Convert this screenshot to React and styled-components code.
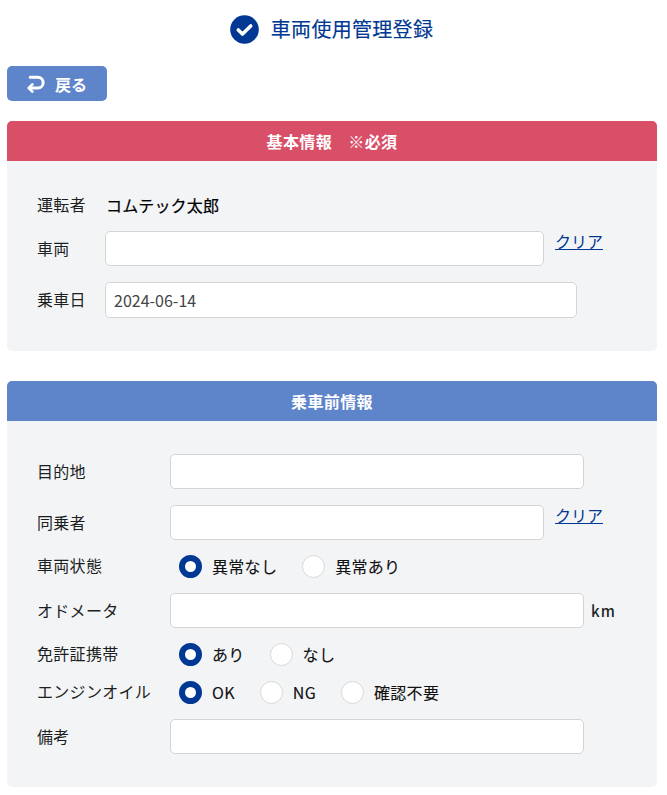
import React from "react";
import styled, { createGlobalStyle } from "styled-components";

const FONT = `"Noto Sans CJK JP", "Noto Sans", sans-serif`;

const GlobalStyle = createGlobalStyle`
  * {
    box-sizing: border-box;
  }
  body {
    margin: 0;
    background-color: #fff;
    font-family: ${FONT};
    color: #212529;
  }
`;

const Page = styled.div`
  padding: 14px 10px 8px 7px;
`;
const Heading = styled.h1`
  display: flex;
  justify-content: center;
  align-items: center;
  gap: 12px;
  height: 30px;
  margin: 0 0 22px;
  padding-right: 1px;
  font-size: 20px;
  font-weight: 400;
  letter-spacing: 0.3px;
  -webkit-text-stroke: 0.15px #003893;
  color: #003893;
  line-height: 30px;
`;
const BackButton = styled.button`
  display: flex;
  align-items: center;
  gap: 10px;
  width: 100px;
  height: 35px;
  padding: 0 0 0 20px;
  margin-bottom: 20px;
  border: 0;
  border-radius: 5px;
  background-color: #5e84ca;
  color: #fff;
  font-family: ${FONT};
  font-size: 16px;
  font-weight: 700;
`;
const Card = styled.section`
  margin-bottom: 30px;
  border-radius: 5px;
  overflow: hidden;
  background-color: #f3f4f6;
`;
const CardHeader = styled.h2`
  height: 40px;
  margin: 0;
  background-color: ${(p) => p.$color};
  color: #fff;
  font-size: 16px;
  font-weight: 700;
  letter-spacing: 0.35px;
  line-height: 40px;
  text-align: center;
`;
const CardBody = styled.div`
  display: flex;
  flex-direction: column;
  padding: ${(p) => p.$top}px 0 33px 30px;
`;
const Row = styled.div`
  display: grid;
  grid-template-columns: ${(p) => p.$label}px 1fr;
  align-items: center;
  min-height: ${(p) => p.$height || 35}px;
  margin-top: ${(p) => p.$gap || 0}px;
`;
const Label = styled.label`
  position: relative;
  top: -1px;
  font-size: 16px;
  letter-spacing: 0.3px;
  line-height: 24px;
  color: #1c1f22;
`;
const Value = styled.div`
  margin-left: -1px;
  font-size: 16px;
  font-weight: 400;
  letter-spacing: 0.15px;
  -webkit-text-stroke: 0.2px #000;
  color: #000;
  line-height: 24px;
`;
const Field = styled.div`
  display: flex;
  align-items: ${(p) => (p.$top ? "flex-start" : "center")};
`;
const Input = styled.input`
  width: ${(p) => p.$width}px;
  height: ${(p) => p.$height || 35}px;
  padding: 0 8px;
  border: 1px solid #d4d4d4;
  border-radius: 5px;
  background-color: #fff;
  color: #444;
  font-family: ${FONT};
  font-size: 16px;
  outline: none;
`;
const ClearLink = styled.a`
  margin: 0 0 0 11px;
  font-size: 16px;
  line-height: 21px;
  color: #003893;
  text-decoration: underline;
`;
const Unit = styled.span`
  margin-left: 7px;
  font-size: 15px;
  font-weight: 500;
  letter-spacing: 1px;
  color: #212529;
`;
const RadioGroup = styled.div`
  display: flex;
  align-items: center;
  gap: 25px;
  padding-left: 9px;
`;
const RadioItem = styled.label`
  display: flex;
  align-items: center;
  gap: 10px;
  font-size: 16px;
  font-weight: 400;
  letter-spacing: 0.3px;
  color: #111;
  -webkit-text-stroke: 0.12px #111;
`;
const RadioMark = styled.span`
  width: 23px;
  height: 23px;
  border-radius: 50%;
  border: ${(p) => (p.$checked ? "6.5px solid #003893" : "1px solid #d8d8d8")};
  background-color: #fff;
`;

function Radios({ items }) {
  return (
    <RadioGroup>
      {items.map((item, i) => (
        <RadioItem key={item}>
          <RadioMark $checked={i === 0} />
          {item}
        </RadioItem>
      ))}
    </RadioGroup>
  );
}

export default function App() {
  return (
    <Page>
      <GlobalStyle />
      <Heading>
        <svg width="29" height="29" viewBox="0 0 29 29" aria-hidden="true">
          <circle cx="14.5" cy="14.5" r="14.3" fill="#003893" />
          <path d="M8.3 15l4.2 4 8.2-8" fill="none" stroke="#fff" strokeWidth="3.6" strokeLinecap="round" strokeLinejoin="round" />
        </svg>
        車両使用管理登録
      </Heading>
      <BackButton>
        <svg width="18" height="18" viewBox="0 0 18 18" aria-hidden="true">
          <path d="M3.2 2.3h7.6a5.2 5.2 0 0 1 0 10.7H3" fill="none" stroke="#fff" strokeWidth="3" strokeLinecap="round" />
          <path d="M5.4 9.4 1.8 13l3.6 3.6" fill="none" stroke="#fff" strokeWidth="2.6" strokeLinecap="round" strokeLinejoin="round" />
        </svg>
        戻る
      </BackButton>
      <Card>
        <CardHeader $color="#d94f67">基本情報　※必須</CardHeader>
        <CardBody $top={32}>
          <Row $label={70} $height={24}>
            <Label>運転者</Label>
            <Value>コムテック太郎</Value>
          </Row>
          <Row $label={68} $gap={14}>
            <Label>車両</Label>
            <Field $top>
              <Input $width={439} />
              <ClearLink>クリア</ClearLink>
            </Field>
          </Row>
          <Row $label={68} $gap={16} $height={36}>
            <Label>乗車日</Label>
            <Field>
              <Input $width={472} $height={36} defaultValue="2024-06-14" />
            </Field>
          </Row>
        </CardBody>
      </Card>
      <Card>
        <CardHeader $color="#5e84ca">乗車前情報</CardHeader>
        <CardBody $top={33}>
          <Row $label={133}>
            <Label>目的地</Label>
            <Field>
              <Input $width={414} />
            </Field>
          </Row>
          <Row $label={133} $gap={16}>
            <Label>同乗者</Label>
            <Field $top>
              <Input $width={374} />
              <ClearLink>クリア</ClearLink>
            </Field>
          </Row>
          <Row $label={133} $gap={12} $height={28}>
            <Label>車両状態</Label>
            <Radios items={["異常なし", "異常あり"]} />
          </Row>
          <Row $label={133} $gap={13}>
            <Label>オドメータ</Label>
            <Field>
              <Input $width={414} />
              <Unit>km</Unit>
            </Field>
          </Row>
          <Row $label={133} $gap={12} $height={28}>
            <Label>免許証携帯</Label>
            <Radios items={["あり", "なし"]} />
          </Row>
          <Row $label={133} $gap={10} $height={28}>
            <Label>エンジンオイル</Label>
            <Radios items={["OK", "NG", "確認不要"]} />
          </Row>
          <Row $label={133} $gap={13}>
            <Label>備考</Label>
            <Field>
              <Input $width={414} />
            </Field>
          </Row>
        </CardBody>
      </Card>
    </Page>
  );
}
